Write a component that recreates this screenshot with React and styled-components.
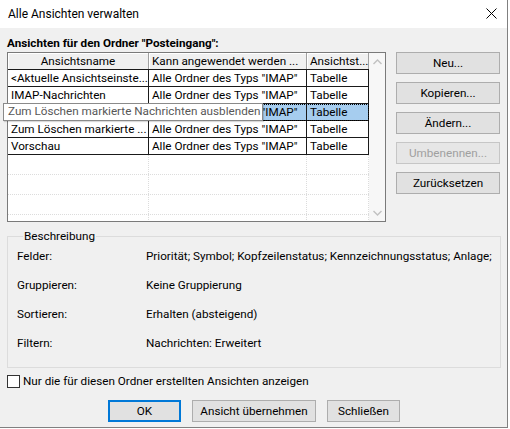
import React from 'react';
import styled, { createGlobalStyle } from 'styled-components';

const GlobalStyle = createGlobalStyle`
  html, body {
    margin: 0;
    padding: 0;
    background: #fff;
  }
  body {
    font-family: "Segoe UI", Roboto, "Noto Sans", "Liberation Sans", sans-serif;
    font-size: 11.7px;
    color: #000;
  }
  * { box-sizing: border-box; }
`;

const VIEWS = [
  { name: '<Aktuelle Ansichtseinste...', scope: 'Alle Ordner des Typs "IMAP"', type: 'Tabelle' },
  { name: 'IMAP-Nachrichten', scope: 'Alle Ordner des Typs "IMAP"', type: 'Tabelle' },
  { name: 'Zum Löschen markierte ...', scope: 'Alle Ordner des Typs "IMAP"', type: 'Tabelle', selected: true },
  { name: 'Zum Löschen markierte ...', scope: 'Alle Ordner des Typs "IMAP"', type: 'Tabelle' },
  { name: 'Vorschau', scope: 'Alle Ordner des Typs "IMAP"', type: 'Tabelle' },
];

const DESCRIPTION = [
  ['Felder:', 'Priorität; Symbol; Kopfzeilenstatus; Kennzeichnungsstatus; Anlage; Von; Betreff'],
  ['Gruppieren:', 'Keine Gruppierung'],
  ['Sortieren:', 'Erhalten (absteigend)'],
  ['Filtern:', 'Nachrichten: Erweitert'],
];

function App() {
  return (
    <>
      <GlobalStyle />
      <Dialog>
        <TitleBar>
          <span>Alle Ansichten verwalten</span>
          <svg width="11" height="11" viewBox="0 0 11 11">
            <path d="M0.5 0.5 L10.5 10.5 M10.5 0.5 L0.5 10.5" stroke="#000" strokeWidth="1" />
          </svg>
        </TitleBar>
        <Body>
          <FolderLabel>Ansichten für den Ordner "Posteingang":</FolderLabel>
          <MainRow>
            <List>
              <Table>
                <Row>
                  <HeaderCell $center>Ansichtsname</HeaderCell>
                  <HeaderCell>Kann angewendet werden ...</HeaderCell>
                  <HeaderCell>Ansichtst...</HeaderCell>
                </Row>
                {VIEWS.map((v, i) => (
                  <Row key={i} $selected={v.selected}>
                    <Cell>{v.name}</Cell>
                    <Cell>{v.scope}</Cell>
                    <Cell>{v.type}</Cell>
                  </Row>
                ))}
                {[0, 1, 2, 3].map((i) => (
                  <EmptyRow key={i}>
                    <EmptyCell />
                    <EmptyCell />
                    <EmptyCell />
                  </EmptyRow>
                ))}
              </Table>
              <ScrollBar>
                <svg width="9" height="6" viewBox="0 0 9 6">
                  <path d="M0.5 5 L4.5 1 L8.5 5" fill="none" stroke="#c2c2c2" strokeWidth="1.4" />
                </svg>
                <svg width="9" height="6" viewBox="0 0 9 6">
                  <path d="M0.5 1 L4.5 5 L8.5 1" fill="none" stroke="#c2c2c2" strokeWidth="1.4" />
                </svg>
              </ScrollBar>
              <Tooltip>Zum Löschen markierte Nachrichten ausblenden</Tooltip>
            </List>
            <ButtonColumn>
              <Button>Neu...</Button>
              <Button>Kopieren...</Button>
              <Button>Ändern...</Button>
              <Button disabled>Umbenennen...</Button>
              <Button>Zurücksetzen</Button>
            </ButtonColumn>
          </MainRow>
          <GroupBox>
            <Legend>Beschreibung</Legend>
            <DescGrid>
              {DESCRIPTION.map(([label, value]) => (
                <React.Fragment key={label}>
                  <span>{label}</span>
                  <DescValue>{value}</DescValue>
                </React.Fragment>
              ))}
            </DescGrid>
          </GroupBox>
          <CheckRow>
            <CheckBox />
            <span>Nur die für diesen Ordner erstellten Ansichten anzeigen</span>
          </CheckRow>
          <FooterButtons>
            <Button $width={73} $default>OK</Button>
            <Button $width={124}>Ansicht übernehmen</Button>
            <Button $width={73}>Schließen</Button>
          </FooterButtons>
        </Body>
      </Dialog>
    </>
  );
}

const Dialog = styled.div`
  width: 508px;
  height: 428px;
  display: flex;
  flex-direction: column;
  border-right: 1px solid #808080;
  border-bottom: 1px solid #808080;
`;

const TitleBar = styled.div`
  height: 28px;
  flex-shrink: 0;
  background: #fff;
  display: flex;
  align-items: center;
  justify-content: space-between;
  padding: 0 10px 1px 8px;
  font-size: 12px;
`;

const Body = styled.div`
  flex: 1;
  background: #f0f0f0;
  padding: 7px 6px 0 7px;
  display: flex;
  flex-direction: column;
`;

const FolderLabel = styled.div`
  font-weight: bold;
  height: 17px;
  line-height: 17px;
  white-space: nowrap;
`;

const MainRow = styled.div`
  display: flex;
  gap: 10px;
`;

const List = styled.div`
  position: relative;
  width: 379px;
  height: 170px;
  border: 1px solid #7a7a7a;
  background: #fff;
  display: flex;
`;

const Table = styled.div`
  width: 361px;
  overflow: hidden;
  display: flex;
  flex-direction: column;
`;

const Row = styled.div`
  display: grid;
  grid-template-columns: 141px 158px 62px;
  height: 17px;
  flex-shrink: 0;
  border-bottom: 1px solid #1a1a1a;
  background: ${(p) => (p.$selected ? '#a6cdef' : 'transparent')};
  outline: ${(p) => (p.$selected ? '1px dotted #000' : 'none')};
  outline-offset: -1px;
`;

const HeaderCell = styled.div`
  background: #f0f0f0;
  border-right: 1px solid #a0a0a0;
  box-shadow: inset 1px 1px 0 #fff;
  padding: 0 3px;
  line-height: 16px;
  white-space: nowrap;
  overflow: hidden;
  text-align: ${(p) => (p.$center ? 'center' : 'left')};
`;

const Cell = styled.div`
  border-right: 1px solid #1a1a1a;
  padding: 0 3px;
  line-height: 16px;
  white-space: nowrap;
  overflow: hidden;
`;

const EmptyRow = styled.div`
  display: grid;
  grid-template-columns: 141px 158px 62px;
  height: 20px;
  flex-shrink: 0;
  border-bottom: 1px dotted #dcdcdc;
`;

const EmptyCell = styled.div`
  border-right: 1px dotted #dcdcdc;
`;

const ScrollBar = styled.div`
  flex: 1;
  background: #f7f7f7;
  display: flex;
  flex-direction: column;
  justify-content: space-between;
  align-items: center;
  padding: 6px 0 5px;
`;

const Tooltip = styled.div`
  position: absolute;
  left: -5px;
  top: 50px;
  width: 260px;
  height: 18px;
  background: #fff;
  border: 1px solid #8a8a8a;
  box-shadow: 1px 1px 1px rgba(0, 0, 0, 0.15);
  color: #575757;
  padding-left: 4px;
  line-height: 15px;
  white-space: nowrap;
  overflow: hidden;
`;

const ButtonColumn = styled.div`
  display: flex;
  flex-direction: column;
  gap: 8px;
`;

const Button = styled.button`
  width: ${(p) => p.$width || 104}px;
  height: 22px;
  padding: 0;
  font: inherit;
  color: #000;
  background: #e1e1e1;
  border: ${(p) => (p.$default ? '2px solid #0078d7' : '1px solid #adadad')};
  &:disabled {
    color: #a0a0a0;
    background: #e6e6e6;
    border-color: #c6c6c6;
  }
`;

const GroupBox = styled.fieldset`
  margin: 6px 0 0;
  width: 494px;
  height: 140px;
  padding: 0 0 0 9px;
  border: 1px solid #dcdcdc;
  min-width: 0;
`;

const Legend = styled.legend`
  margin-left: 6px;
  padding: 0 1px;
  line-height: 16px;
`;

const DescGrid = styled.div`
  display: grid;
  grid-template-columns: 129px 1fr;
  row-gap: 12px;
  grid-auto-rows: 17px;
  padding-top: 4px;
  line-height: 17px;
  white-space: nowrap;
  overflow: hidden;
  width: 476px;
`;

const DescValue = styled.span`
  overflow: hidden;
`;

const CheckRow = styled.div`
  display: flex;
  align-items: center;
  gap: 3px;
  margin-top: 5px;
  height: 16px;
  white-space: nowrap;
`;

const CheckBox = styled.span`
  width: 13px;
  height: 13px;
  border: 1px solid #333;
  background: #fff;
  flex-shrink: 0;
`;

const FooterButtons = styled.div`
  display: flex;
  justify-content: center;
  gap: 11px;
  margin-top: 11px;
`;

export default App;
